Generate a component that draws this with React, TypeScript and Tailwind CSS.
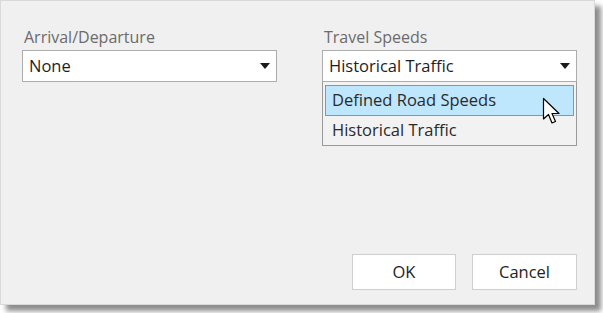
import React from "react";

const font = { fontFamily: '"Open Sans", "Noto Sans", Arial, sans-serif' };

function Caret() {
  return (
    <svg width="10" height="6" viewBox="0 0 10 6" className="shrink-0">
      <path d="M0 0 L10 0 L5 6 Z" fill="#1a1a1a" />
    </svg>
  );
}

function Select({ value, children }: { value: string; children?: React.ReactNode }) {
  return (
    <div className="relative">
      <div className="flex items-center justify-between h-[32px] bg-white border border-[#acacac] pl-[6px] pr-[6px]">
        <span className="text-[16.5px] text-[#1e1e1e] leading-none">{value}</span>
        <Caret />
      </div>
      {children}
    </div>
  );
}

function Cursor() {
  return (
    <svg width="22" height="30" viewBox="0 0 22 30" className="absolute left-[216px] top-[11px]">
      <path
        d="M1.5 1.5 L1.5 22 L6.5 17.5 L10 26 L13.5 24.5 L10 16.5 L17 16.5 Z"
        fill="#fff"
        stroke="#000"
        strokeWidth="1.2"
        strokeLinejoin="round"
      />
    </svg>
  );
}

export default function App() {
  return (
    <div className="w-[603px] h-[313px] bg-white" style={font}>
      <div className="w-[595px] h-[305px] bg-[#f0f0f0] border border-[#d9d9d9] shadow-[6px_6px_5px_rgba(0,0,0,0.45)] flex flex-col justify-between pl-[21px] pr-[17px] pt-[26px] pb-[14px]">
        <div className="flex gap-[45px]">
          <div className="w-[255px] flex flex-col">
            <span className="text-[16px] text-[#6b6b6b] leading-[20px] mb-[3px] pl-[2px]">Arrival/Departure</span>
            <Select value="None" />
          </div>
          <div className="w-[255px] flex flex-col">
            <span className="text-[16px] text-[#6b6b6b] leading-[20px] mb-[3px] pl-[2px]">Travel Speeds</span>
            <Select value="Historical Traffic">
              <div className="absolute left-0 right-0 top-[32px] h-[64px] bg-[#f2f2f2] border border-[#9a9a9a] border-t-0 pt-[3px] px-[2px]">
                <div className="relative h-[31px] bg-[#bee6fd] border border-[#3daee9] flex items-center pl-[6px] text-[16.5px] text-[#2a2a2a]">
                  Defined Road Speeds
                  <Cursor />
                </div>
                <div className="h-[28px] flex items-center pl-[7px] text-[16.5px] text-[#2a2a2a]">
                  Historical Traffic
                </div>
              </div>
            </Select>
          </div>
        </div>
        <div className="flex justify-end gap-[16px]">
          <button className="w-[104px] h-[36px] bg-white border border-[#cfcfcf] text-[16.5px] text-[#1e1e1e]">OK</button>
          <button className="w-[105px] h-[36px] bg-white border border-[#cfcfcf] text-[16.5px] text-[#1e1e1e]">Cancel</button>
        </div>
      </div>
    </div>
  );
}
